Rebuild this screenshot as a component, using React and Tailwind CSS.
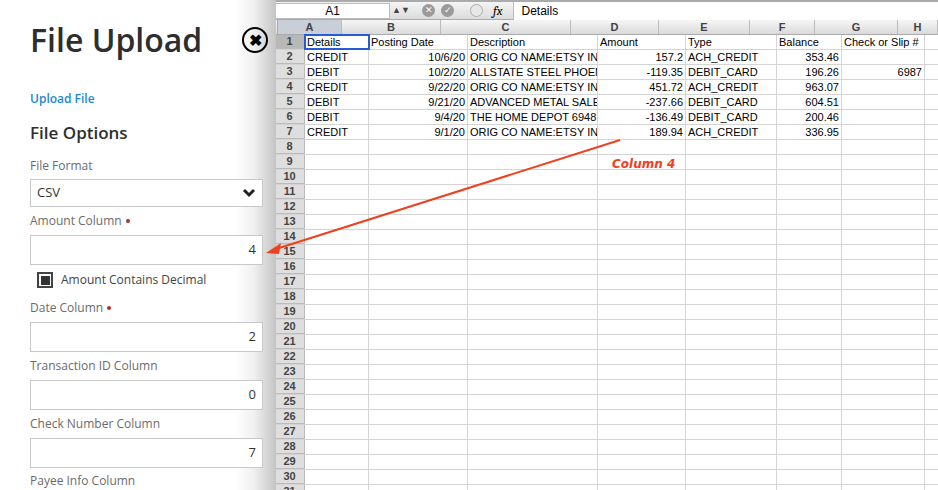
import React from "react";

const cols = [
  { l: "A", w: 64 }, { l: "B", w: 99 }, { l: "C", w: 130 }, { l: "D", w: 88 },
  { l: "E", w: 91 }, { l: "F", w: 65 }, { l: "G", w: 83 }, { l: "H", w: 40 },
];
const data = [
  ["Details", "Posting Date", "Description", "Amount", "Type", "Balance", "Check or Slip #", ""],
  ["CREDIT", "10/6/20", "ORIG CO NAME:ETSY INC", "157.2", "ACH_CREDIT", "353.46", "", ""],
  ["DEBIT", "10/2/20", "ALLSTATE STEEL PHOENIX", "-119.35", "DEBIT_CARD", "196.26", "6987", ""],
  ["CREDIT", "9/22/20", "ORIG CO NAME:ETSY INC", "451.72", "ACH_CREDIT", "963.07", "", ""],
  ["DEBIT", "9/21/20", "ADVANCED METAL SALES I", "-237.66", "DEBIT_CARD", "604.51", "", ""],
  ["DEBIT", "9/4/20", "THE HOME DEPOT 6948 PH", "-136.49", "DEBIT_CARD", "200.46", "", ""],
  ["CREDIT", "9/1/20", "ORIG CO NAME:ETSY INC", "189.94", "ACH_CREDIT", "336.95", "", ""],
];
const right = [false, true, false, true, false, true, true, false];

function Field({ label, req, value }) {
  return (
    <div className="flex flex-col">
      <div className="text-[12px] text-[#6b6b6b] h-[20px] flex items-center gap-1">
        {label}
        {req && <span className="w-[4px] h-[4px] rounded-full bg-[#b03030] inline-block" />}
      </div>
      <div className="mt-[4px] w-[233px] h-[30px] border border-[#c8c8c8] bg-white flex items-center justify-end pr-[6px] text-[13px] text-[#333]">
        {value}
      </div>
    </div>
  );
}

export default function App() {
  const rows = Array.from({ length: 31 }, (_, i) => i + 1);
  return (
    <div className="relative w-[938px] h-[490px] overflow-hidden bg-white" style={{ fontFamily: "'Liberation Sans', Arial, sans-serif" }}>
      <div className="absolute left-[275px] top-0 right-0 bottom-0 flex flex-col">
        <div className="h-[20px] border-t-2 border-[#9cc49c] bg-[linear-gradient(#f4f4f4,#dcdcdc)] flex items-center text-[12px] border-b border-[#aaa]">
          <div className="w-[115px] h-[16px] bg-white border border-[#bbb] flex items-center justify-center text-[12px]">A1</div>
          <div className="w-[22px] text-center text-[9px] text-[#444]">▲▼</div>
          <div className="flex items-center gap-[6px] ml-[10px]">
            <span className="w-[13px] h-[13px] rounded-full bg-[#9a9a9a] text-white text-[9px] flex items-center justify-center">✕</span>
            <span className="w-[13px] h-[13px] rounded-full bg-[#9a9a9a] text-white text-[9px] flex items-center justify-center">✓</span>
            <span className="ml-[10px] w-[13px] h-[13px] rounded-full bg-[#e8e8e8] border border-[#aaa]" />
            <span className="italic font-serif text-[13px] ml-[4px]">fx</span>
          </div>
          <div className="ml-[10px] flex-1 h-[18px] bg-white border-l border-[#bbb] flex items-center pl-[8px] text-[12px]">Details</div>
        </div>
        <div className="flex h-[15px] bg-[linear-gradient(#f6f6f6,#dadada)] border-b border-[#aaa] text-[11px] text-[#444] font-bold">
          <div className="w-[30px] border-r border-[#aaa]" />
          {cols.map((c) => (
            <div key={c.l} style={{ width: c.w }} className={`shrink-0 border-r border-[#bbb] flex items-center justify-center ${c.l === "A" ? "bg-[#c8cfd9]" : ""}`}>{c.l}</div>
          ))}
        </div>
        {rows.map((r) => (
          <div key={r} className="flex h-[15px] border-b border-[#d4d4d4] text-[11px] text-black">
            <div className={`w-[30px] shrink-0 border-r border-[#999] flex items-center justify-center font-bold text-[#444] ${r === 1 ? "bg-[#b8b8b8]" : "bg-[#dedede]"} border-b border-[#bbb]`}>{r}</div>
            {cols.map((c, ci) => (
              <div key={c.l} style={{ width: c.w }} className={`shrink-0 overflow-hidden whitespace-nowrap border-r border-[#d4d4d4] px-[2px] flex items-center ${right[ci] && r > 1 ? "justify-end" : ""} ${r === 1 && ci === 0 ? "outline-2 outline-[#2a5bd7] -outline-offset-1" : ""}`}>
                {data[r - 1] ? data[r - 1][ci] : ""}
              </div>
            ))}
          </div>
        ))}
      </div>

      <div className="absolute left-0 top-0 bottom-0 w-[276px] bg-[linear-gradient(90deg,#ffffff_85%,#f0f0f0_92%,#c4c4c4_100%)] pl-[30px] flex flex-col" style={{ fontFamily: "'Open Sans', sans-serif" }}>
        <div className="flex items-center mt-[20px] h-[44px]">
          <div className="text-[32px] font-semibold text-[#2e2e2e] leading-none">File Upload</div>
          <div className="ml-[40px] w-[26px] h-[26px] rounded-full border-2 border-black flex items-center justify-center text-[16px] font-black leading-none">✖</div>
        </div>
        <div className="mt-[30px] text-[12px] font-semibold text-[#1a8ad0]">Upload File</div>
        <div className="mt-[12px] text-[17px] font-semibold text-[#2e2e2e]">File Options</div>
        <div className="mt-[11px] text-[12px] text-[#6b6b6b] h-[20px] flex items-center">File Format</div>
        <div className="mt-[4px] w-[233px] h-[30px] border border-[#c8c8c8] bg-white flex items-center justify-between px-[6px] text-[13px] text-[#333]">
          CSV
          <svg width="14" height="10" viewBox="0 0 14 10"><path d="M2 2l5 5 5-5" stroke="#222" strokeWidth="3" fill="none" /></svg>
        </div>
        <div className="mt-[4px]"><Field label="Amount Column" req value="4" /></div>
        <div className="flex items-center gap-[8px] ml-[7px] mt-[7px] h-[16px] text-[12px] text-[#444]">
          <span className="w-[16px] h-[16px] border-2 border-[#444] flex items-center justify-center"><span className="w-[9px] h-[9px] bg-[#333]" /></span>
          Amount Contains Decimal
        </div>
        <div className="mt-[10px]"><Field label="Date Column" req value="2" /></div>
        <div className="mt-[4px]"><Field label="Transaction ID Column" value="0" /></div>
        <div className="mt-[4px]"><Field label="Check Number Column" value="7" /></div>
        <div className="mt-[4px] text-[12px] text-[#6b6b6b]">Payee Info Column</div>
      </div>

      <svg className="absolute left-0 top-0 pointer-events-none" width="938" height="490">
        <line x1="620" y1="140" x2="276" y2="249" stroke="#f0401e" strokeWidth="2" />
        <path d="M266 253 L281 243 L279 254 Z" fill="#f0401e" />
      </svg>
      <div className="absolute left-[612px] top-[155px] text-[12px] italic font-bold text-[#f0401e]" style={{ fontFamily: "'Comic Sans MS', 'DejaVu Sans', sans-serif" }}>Column 4</div>
    </div>
  );
}
